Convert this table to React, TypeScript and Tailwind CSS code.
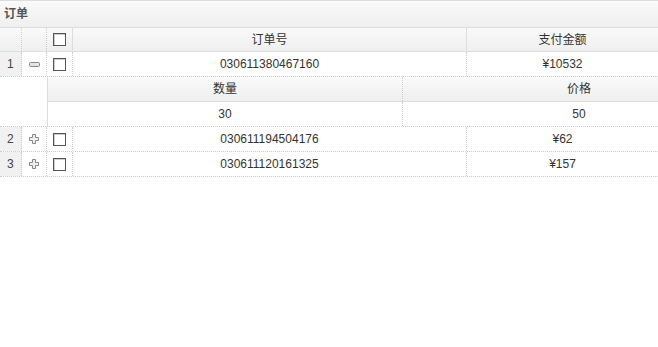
import React from 'react';

interface Order {
  no: number;
  code: string;
  amount: string;
  expanded?: boolean;
  detail?: { qty: string; price: string };
}

const ORDERS: Order[] = [
  { no: 1, code: '030611380467160', amount: '¥10532', expanded: true, detail: { qty: '30', price: '50' } },
  { no: 2, code: '030611194504176', amount: '¥62' },
  { no: 3, code: '030611120161325', amount: '¥157' },
];

const CheckBox: React.FC = () => (
  <span className="block w-[13px] h-[13px] border border-[#555] bg-white shadow-[inset_1px_1px_0_#ccc]" />
);

const ExpandIcon: React.FC<{ open?: boolean }> = ({ open }) =>
  open ? (
    <svg width="12" height="12" viewBox="0 0 12 12">
      <rect x="1.5" y="4.5" width="10" height="4" rx="1" fill="#e4e4e4" stroke="#888" />
    </svg>
  ) : (
    <svg width="12" height="12" viewBox="0 0 12 12">
      <path d="M4.5 1.5h3v3h3v3h-3v3h-3v-3h-3v-3h3z" fill="#eee" stroke="#888" />
    </svg>
  );

const App: React.FC = () => {
  return (
    <div
      className="w-[658px] h-[347px] bg-white overflow-hidden text-[12px] text-[#333]"
      style={{ fontFamily: '"Liberation Sans", Arial, "Noto Sans CJK SC", sans-serif' }}
    >
      {/* 标题 */}
      <div className="h-[28px] border-y border-[#ddd] bg-gradient-to-b from-[#fafafa] to-[#efefef] flex items-center px-[4px]">
        <span className="font-bold text-[#555]">订单</span>
      </div>

      {/* 表头 */}
      <div className="flex h-[24px] border-b border-[#ddd] bg-gradient-to-b from-[#fafafa] to-[#efefef]">
        <div className="w-[22px] border-r border-dotted border-[#ccc]" />
        <div className="w-[25px] border-r border-dotted border-[#ccc]" />
        <div className="w-[26px] border-r border-solid border-[#ddd] flex items-center justify-center">
          <CheckBox />
        </div>
        <div className="w-[394px] border-r border-solid border-[#ddd] flex items-center justify-center">订单号</div>
        <div className="flex-1 flex items-center justify-center">支付金额</div>
      </div>

      {ORDERS.map((o) => (
        <React.Fragment key={o.no}>
          <div className="flex h-[25px] border-b border-dotted border-[#ccc]">
            <div className="w-[22px] bg-[#f1f1f1] border-r border-dotted border-[#ccc] flex items-center pl-[7px] text-[#444]">
              {o.no}
            </div>
            <div className="w-[25px] border-r border-dotted border-[#ccc] flex items-center justify-center">
              <ExpandIcon open={o.expanded} />
            </div>
            <div className="w-[26px] border-r border-dotted border-[#ccc] flex items-center justify-center">
              <CheckBox />
            </div>
            <div className="w-[394px] border-r border-dotted border-[#ccc] flex items-center justify-center">{o.code}</div>
            <div className="flex-1 flex items-center justify-center">{o.amount}</div>
          </div>

          {o.expanded && o.detail && (
            <div className="flex h-[50px] border-b border-dotted border-[#ccc]">
              <div className="w-[47px]" />
              <div className="flex-1 overflow-hidden border-l border-[#ddd]">
                <div className="w-[707px]">
                  <div className="flex h-[25px] border-b border-[#ddd] bg-gradient-to-b from-[#fafafa] to-[#efefef]">
                    <div className="w-[355px] border-r border-dotted border-[#ccc] flex items-center justify-center">数量</div>
                    <div className="flex-1 flex items-center justify-center">价格</div>
                  </div>
                  <div className="flex h-[24px]">
                    <div className="w-[355px] border-r border-dotted border-[#ccc] flex items-center justify-center">
                      {o.detail.qty}
                    </div>
                    <div className="flex-1 flex items-center justify-center">{o.detail.price}</div>
                  </div>
                </div>
              </div>
            </div>
          )}
        </React.Fragment>
      ))}
    </div>
  );
};

export default App;
